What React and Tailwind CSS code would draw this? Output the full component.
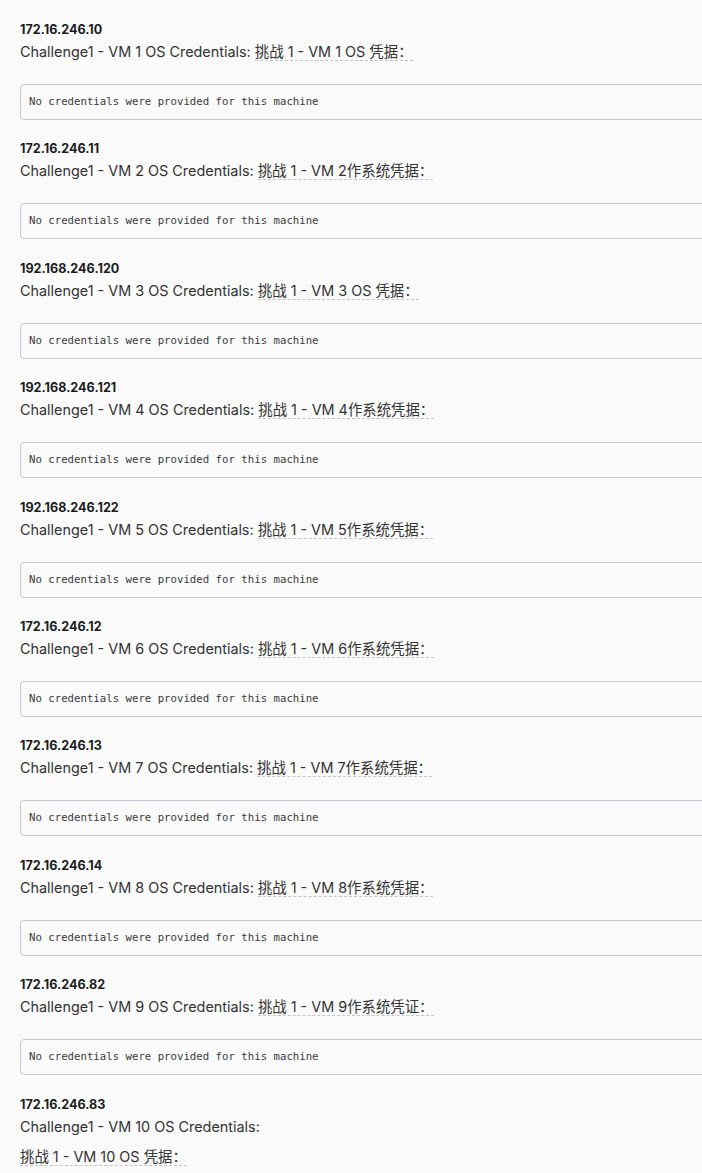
import React from "react";

const items = [
  { ip: "172.16.246.10", vm: "1", zh: "挑战 1 - VM 1 OS 凭据：" },
  { ip: "172.16.246.11", vm: "2", zh: "挑战 1 - VM 2作系统凭据：" },
  { ip: "192.168.246.120", vm: "3", zh: "挑战 1 - VM 3 OS 凭据：" },
  { ip: "192.168.246.121", vm: "4", zh: "挑战 1 - VM 4作系统凭据：" },
  { ip: "192.168.246.122", vm: "5", zh: "挑战 1 - VM 5作系统凭据：" },
  { ip: "172.16.246.12", vm: "6", zh: "挑战 1 - VM 6作系统凭据：" },
  { ip: "172.16.246.13", vm: "7", zh: "挑战 1 - VM 7作系统凭据：" },
  { ip: "172.16.246.14", vm: "8", zh: "挑战 1 - VM 8作系统凭据：" },
  { ip: "172.16.246.82", vm: "9", zh: "挑战 1 - VM 9作系统凭证：" },
];

const font = "font-['Inter','Noto_Sans_CJK_SC',sans-serif]";

function Item({ ip, vm, zh }) {
  return (
    <div className="flex flex-col">
      <div className="text-[12.6px] leading-4 font-bold text-[#1c1c1c]">{ip}</div>
      <div className="mt-1 text-[14.4px] leading-5 text-[#333333]">
        Challenge1 - VM {vm} OS Credentials:{" "}
        <span className="border-b border-dashed border-[#c4c4c4]">{zh}</span>
      </div>
      <div className="mt-[22px] -mr-8 h-9 flex items-center rounded border border-[#c9c6d6] bg-[#fafafa] pl-2 font-['DejaVu_Sans_Mono',monospace] text-[10.7px] text-[#3a3a3a]">
        No credentials were provided for this machine
      </div>
    </div>
  );
}

export default function App() {
  return (
    <div className={`min-h-[1173px] w-full overflow-hidden bg-[#fafafa] pl-5 pt-[22px] ${font}`}>
      <div className="flex flex-col gap-[21.4px]">
        {items.map((it) => (
          <Item key={it.ip} {...it} />
        ))}
        <div className="flex flex-col">
          <div className="text-[12.6px] leading-4 font-bold text-[#1c1c1c]">172.16.246.83</div>
          <div className="mt-1 text-[14.4px] leading-5 text-[#333333]">Challenge1 - VM 10 OS Credentials:</div>
          <div className="mt-2.5 text-[14.4px] leading-5 text-[#333333]">
            <span className="border-b border-dashed border-[#c4c4c4]">挑战 1 - VM 10 OS 凭据：</span>
          </div>
        </div>
      </div>
    </div>
  );
}
